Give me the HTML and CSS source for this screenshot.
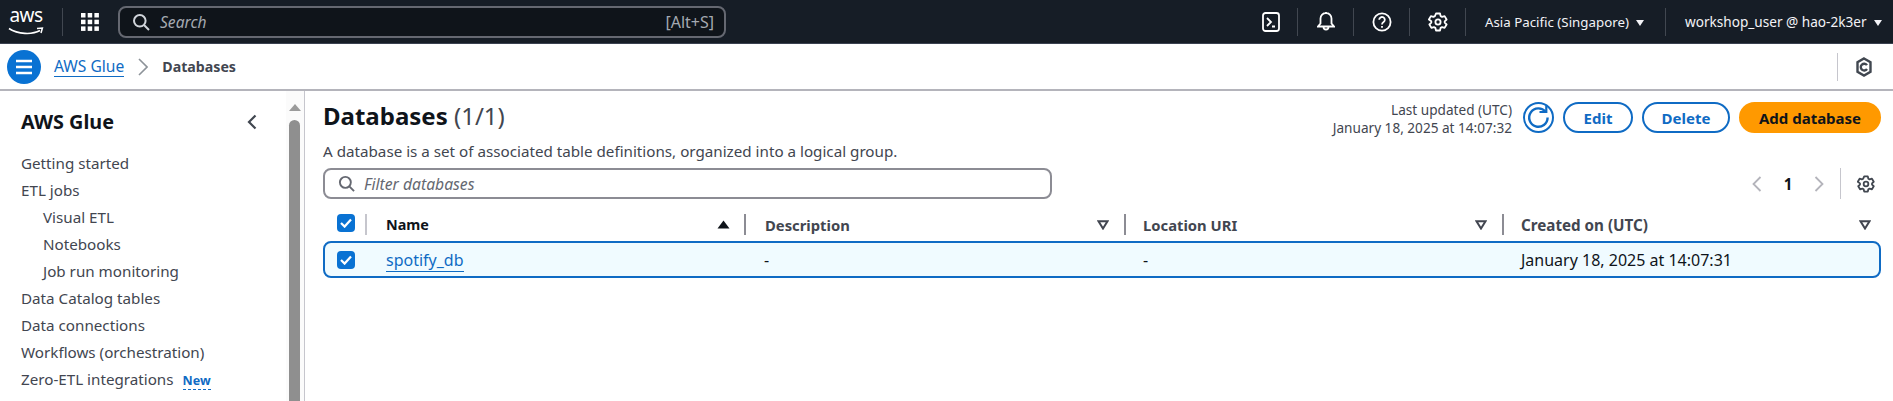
FILE: index.html
```html
<!DOCTYPE html>
<html lang="en">
<head>
<meta charset="utf-8">
<title>Databases | AWS Glue</title>
<link rel="stylesheet" href="styles.css">
</head>
<body>
<header class="topbar">
  <div class="logo"><span class="logo-text">aws</span>
    <svg class="logo-smile" width="36" height="9" viewBox="0 0 36 9"><path d="M1 1.5C10 7.5 24 8 32 3.6" fill="none" stroke="#fff" stroke-width="1.7"/><path d="M29 1.4L34.4 1 33 6" fill="none" stroke="#fff" stroke-width="1.5"/></svg>
  </div>
  <span class="tdiv tdiv-logo"></span>
  <svg class="grid-icon" width="20" height="20" viewBox="0 0 20 20" fill="#fff"><rect x="1" y="1" width="4.5" height="4.5"/><rect x="7.7" y="1" width="4.5" height="4.5"/><rect x="14.4" y="1" width="4.5" height="4.5"/><rect x="1" y="7.7" width="4.5" height="4.5"/><rect x="7.7" y="7.7" width="4.5" height="4.5"/><rect x="14.4" y="7.7" width="4.5" height="4.5"/><rect x="1" y="14.4" width="4.5" height="4.5"/><rect x="7.7" y="14.4" width="4.5" height="4.5"/><rect x="14.4" y="14.4" width="4.5" height="4.5"/></svg>
  <div class="search">
    <svg width="18" height="18" viewBox="0 0 18 18" fill="none" stroke="#d1d5db" stroke-width="2"><circle cx="7.8" cy="7.8" r="5.8"/><path d="M12 12l5 5"/></svg>
    <span class="search-text">Search</span>
    <span class="search-key">[Alt+S]</span>
  </div>
  <div class="top-right">
    <span class="top-icon top-icon-first"><svg width="18" height="20" viewBox="0 0 18 20" fill="none" stroke="#fff" stroke-width="1.8"><rect x="1" y="1" width="16" height="18" rx="2.5"/><path d="M5 6l4 4-4 4M10 14.5h3"/></svg></span>
    <span class="top-icon"><svg width="18" height="21" viewBox="0 0 18 21" fill="none" stroke="#fff" stroke-width="1.8"><path d="M1 15.5h16l-2.5-3V7.5a5.5 5.5 0 0 0-11 0v5zM6.5 16a2.5 2.5 0 0 0 5 0M9 2V1"/></svg></span>
    <span class="top-icon"><svg width="20" height="20" viewBox="0 0 20 20" fill="none" stroke="#fff" stroke-width="1.8"><circle cx="10" cy="10" r="8.6"/><path d="M7.2 7.8a2.8 2.8 0 1 1 4.4 2.3c-1 .7-1.6 1.2-1.6 2.4"/><path d="M10 14v1.8"/></svg></span>
    <span class="top-icon"><svg width="20" height="20" viewBox="0 0 20 20" fill="none" stroke="#fff" stroke-width="1.8"><path d="M8 1.5h4l.6 2.6 1.5.8 2.5-.8 2 3.4-1.9 1.8v1.4l1.9 1.8-2 3.4-2.5-.8-1.5.8-.6 2.6H8l-.6-2.6-1.5-.8-2.5.8-2-3.4 1.9-1.8V9.3L.9 7.5l2-3.4 2.5.8 1.5-.8z" stroke-linejoin="round"/><circle cx="10" cy="10" r="2.6"/></svg></span>
    <span class="top-menu top-region">Asia Pacific (Singapore)<i class="caret"></i></span>
    <span class="top-menu top-user">workshop_user @ hao-2k3er<i class="caret"></i></span>
  </div>
</header>

<nav class="crumbs">
  <span class="menu-btn"><svg width="18" height="16" viewBox="0 0 18 16" stroke="#fff" stroke-width="2.4"><path d="M1 2h16M1 8h16M1 14h16"/></svg></span>
  <a class="crumb-link">AWS Glue</a>
  <svg class="crumb-sep" width="10" height="18" viewBox="0 0 10 18" fill="none" stroke="#8d9399" stroke-width="1.6"><path d="M1 1l8 8-8 8"/></svg>
  <span class="crumb-cur">Databases</span>
  <span class="crumb-right"><svg width="16" height="20" viewBox="0 0 16 20" fill="none" stroke="#414750" stroke-width="2.4"><path d="M8 1.5l6.5 3.7v9.6L8 18.5l-6.5-3.7V5.2z"/><path d="M11 8.2A3.4 3.4 0 1 0 11 12" /></svg></span>
</nav>

<div class="layout">
  <aside class="side">
    <div class="side-nav">
      <div class="side-head"><h2 class="side-title">AWS Glue</h2>
        <svg width="10" height="16" viewBox="0 0 10 16" fill="none" stroke="#414750" stroke-width="2.2"><path d="M8.5 1.5L2 8l6.5 6.5"/></svg>
      </div>
      <ul class="side-list">
        <li>Getting started</li>
        <li>ETL jobs</li>
        <li class="sub">Visual ETL</li>
        <li class="sub">Notebooks</li>
        <li class="sub">Job run monitoring</li>
        <li>Data Catalog tables</li>
        <li>Data connections</li>
        <li>Workflows (orchestration)</li>
        <li>Zero-ETL integrations<span class="new">New</span></li>
      </ul>
    </div>
    <div class="scrollbar"><i class="scroll-up"></i><i class="scroll-thumb"></i></div>
  </aside>

  <main class="main">
    <div class="head">
      <div class="head-left">
        <h1 class="title">Databases <span class="count">(1/1)</span></h1>
        <p class="desc">A database is a set of associated table definitions, organized into a logical group.</p>
      </div>
      <div class="actions">
        <div class="updated">Last updated (UTC)<br>January 18, 2025 at 14:07:32</div>
        <span class="refresh"><svg width="25" height="25" viewBox="0 0 25 25" fill="none" stroke="#0f6bc4" stroke-width="2.4"><path d="M19.6 6.8A9.2 9.2 0 1 0 21.6 12.5"/><path d="M13.5 7h6.8V.8" stroke-width="2.2"/></svg></span>
        <button class="btn btn-edit">Edit</button>
        <button class="btn btn-delete">Delete</button>
        <button class="btn primary">Add database</button>
      </div>
    </div>
    <div class="tools">
      <div class="filter">
        <svg width="17" height="17" viewBox="0 0 18 18" fill="none" stroke="#656871" stroke-width="2"><circle cx="7.8" cy="7.8" r="5.8"/><path d="M12 12l5 5"/></svg>
        <span>Filter databases</span>
      </div>
      <div class="pager">
        <svg width="10" height="16" viewBox="0 0 10 16" fill="none" stroke="#b4b4bb" stroke-width="1.8"><path d="M8.5 1L1.5 8l7 7"/></svg>
        <b class="page-num">1</b>
        <svg width="10" height="16" viewBox="0 0 10 16" fill="none" stroke="#b4b4bb" stroke-width="1.8"><path d="M1.5 1l7 7-7 7"/></svg>
        <span class="pager-div"></span>
        <svg class="pager-gear" width="18" height="18" viewBox="0 0 20 20" fill="none" stroke="#414750" stroke-width="2"><path d="M8 1.5h4l.6 2.6 1.5.8 2.5-.8 2 3.4-1.9 1.8v1.4l1.9 1.8-2 3.4-2.5-.8-1.5.8-.6 2.6H8l-.6-2.6-1.5-.8-2.5.8-2-3.4 1.9-1.8V9.3L.9 7.5l2-3.4 2.5.8 1.5-.8z" stroke-linejoin="round"/><circle cx="10" cy="10" r="2.6"/></svg>
      </div>
    </div>
    <div class="thead tgrid">
      <div class="cell-check check-rule"><span class="check"><svg width="12" height="10" viewBox="0 0 12 10" fill="none" stroke="#fff" stroke-width="2.2"><path d="M1 5l3.6 3.6L11 1.5"/></svg></span></div>
      <div class="th th-sorted"><span>Name</span><svg width="13" height="9" viewBox="0 0 13 9"><path d="M6.5 .5L12.5 8.5H.5z" fill="#0f141a"/></svg></div>
      <div class="th th-desc"><span>Description</span><svg width="12" height="10" viewBox="0 0 12 10" fill="none" stroke="#424650" stroke-width="2"><path d="M1.5 1.2h9L6 8.5z"/></svg></div>
      <div class="th"><span>Location URI</span><svg width="12" height="10" viewBox="0 0 12 10" fill="none" stroke="#424650" stroke-width="2"><path d="M1.5 1.2h9L6 8.5z"/></svg></div>
      <div class="th th-last"><span>Created on (UTC)</span><svg width="12" height="10" viewBox="0 0 12 10" fill="none" stroke="#424650" stroke-width="2"><path d="M1.5 1.2h9L6 8.5z"/></svg></div>
    </div>
    <div class="trow tgrid">
      <div class="cell-check"><span class="check"><svg width="12" height="10" viewBox="0 0 12 10" fill="none" stroke="#fff" stroke-width="2.2"><path d="M1 5l3.6 3.6L11 1.5"/></svg></span></div>
      <div class="td"><a class="row-link">spotify_db</a></div>
      <div class="td td-dash">-</div>
      <div class="td">-</div>
      <div class="td">January 18, 2025 at 14:07:31</div>
    </div>
  </main>
</div>
</body>
</html>
```

FILE: styles.css
```css
* { box-sizing: border-box; }
html, body { margin: 0; height: 401px; overflow: hidden; }
body { font-family: "Noto Sans", "Open Sans", sans-serif; font-size: 15.2px; color: #0f141a; background: #fff; }

.topbar { height: 44px; background: #161d26; border-bottom: 1px solid #3a4150; display: flex; align-items: center; color: #fff; padding-left: 8px; }
.logo { width: 36px; height: 34px; position: relative; flex: none; }
.logo-text { display: block; font-size: 19px; line-height: 22px; text-align: center; color: #fff; letter-spacing: -.5px; margin-top: -1px; }
.logo-smile { position: absolute; left: 0; top: 22px; }
.tdiv { width: 1px; background: #414750; flex: none; }
.tdiv-logo { height: 28px; margin: 0 17px 0 18px; }
.grid-icon { flex: none; }
.search { width: 608px; height: 32px; margin-left: 18px; background: #0f141a; border: 2px solid #656871; border-radius: 8px; display: flex; align-items: center; padding: 0 10px 0 12px; flex: none; }
.search-text { font-style: italic; font-size: 15.6px; color: #a4a9b1; margin-left: 10px; }
.search-key { margin-left: auto; font-size: 16px; color: #a4a9b1; }
.top-right { margin-left: auto; display: flex; align-items: center; height: 100%; }
.top-icon { width: 56px; height: 28px; display: flex; align-items: center; justify-content: center; border-right: 1px solid #414750; }
.top-icon-first { padding-left: 3px; }
.top-menu { height: 28px; display: flex; align-items: center; color: #f3f3f7; white-space: nowrap; }
.top-region { font-size: 13.3px; padding-left: 19px; width: 200px; border-right: 1px solid #414750; }
.top-user { font-size: 13.6px; width: 227px; padding-left: 19px; }
.caret { width: 0; height: 0; border-left: 4px solid transparent; border-right: 4px solid transparent; border-top: 6px solid #f3f3f7; margin-left: 7px; margin-top: 2px; }

.crumbs { height: 47px; border-bottom: 2px solid #b4b4bb; display: flex; align-items: center; padding-left: 7px; }
.menu-btn { width: 34px; height: 34px; border-radius: 50%; background: #0972d3; display: flex; align-items: center; justify-content: center; }
.crumb-link { color: #0f6bc4; font-size: 15.6px; margin-left: 13px; border-bottom: 1px solid #0f6bc4; line-height: 20px; }
.crumb-sep { margin: 0 14px; }
.crumb-cur { font-size: 14.2px; font-weight: 700; color: #424650; }
.crumb-right { margin-left: auto; margin-right: 9px; width: 47px; height: 28px; border-left: 1px solid #c6c6cd; display: flex; align-items: center; justify-content: flex-end; padding-right: 12px; }

.layout { display: flex; height: 310px; }
.side { width: 305px; flex: none; border-right: 1px solid #c6c6cd; display: flex; }
.side-nav { width: 286px; padding-left: 21px; flex: none; }
.side-head { height: 56px; display: flex; align-items: center; justify-content: space-between; padding: 6px 29px 0 0; }
.side-title { margin: 0; font-size: 19.8px; font-weight: 700; line-height: 24px; }
.side-list { list-style: none; margin: 3px 0 0; padding: 0; color: #424650; }
.side-list li { height: 27px; line-height: 27px; white-space: nowrap; }
.side-list .sub { padding-left: 22px; }
.new { color: #0f6bc4; font-size: 12.5px; font-weight: 700; margin-left: 9px; border-bottom: 1px dashed #0f6bc4; line-height: 16px; display: inline-block; }
.scrollbar { flex: 1; background: #fbfbfb; display: flex; flex-direction: column; align-items: center; padding: 13px 1px 0 0; }
.scroll-up { width: 0; height: 0; border-left: 6.5px solid transparent; border-right: 6.5px solid transparent; border-bottom: 7px solid #9b9b9b; }
.scroll-thumb { width: 11px; flex: 1; margin-top: 9px; background: #8f8f8f; border-radius: 6px 6px 0 0; }

.main { flex: 1; padding: 0 12px 0 18px; min-width: 0; }
.head { display: flex; justify-content: space-between; height: 77px; }
.title { margin: 7px 0 0; font-size: 24px; font-weight: 700; line-height: 36px; }
.count { font-weight: 400; color: #424650; }
.desc { margin: 7px 0 0; color: #424650; line-height: 20px; }
.actions { display: flex; align-items: flex-start; padding-top: 11px; gap: 9px; }
.updated { text-align: right; color: #424650; font-size: 13.6px; line-height: 18px; margin-top: -1px; }
.refresh { width: 31px; height: 31px; border: 2px solid #0f6bc4; border-radius: 50%; display: flex; align-items: center; justify-content: center; margin-left: 2px; }
.btn { height: 31px; padding: 0; border: 2px solid #0f6bc4; border-radius: 16px; background: #fff; color: #0f6bc4; font: 700 15px "Noto Sans", sans-serif; }
.btn-edit { width: 70px; }
.btn-delete { width: 88px; }
.btn.primary { background: #ff9900; border-color: #ff9900; color: #0f141a; width: 142px; }

.tools { display: flex; justify-content: space-between; align-items: center; height: 31px; }
.filter { width: 729px; height: 31px; border: 2px solid #8c8c94; border-radius: 8px; display: flex; align-items: center; padding-left: 13px; font-style: italic; color: #656871; }
.filter span { margin: 1px 0 0 9px; font-size: 15.7px; }
.pager { display: flex; align-items: center; height: 31px; }
.page-num { width: 52px; text-align: center; color: #0f141a; }
.pager-div { width: 1px; height: 31px; background: #c6c6cd; margin: 0 16px; }
.pager-gear { margin-right: 6px; }

.tgrid { display: grid; grid-template-columns: 44px 377px 380px 378px 379px; }
.thead { height: 24px; margin-top: 15px; font-size: 14.8px; font-weight: 700; color: #424650; }
.cell-check { display: flex; align-items: center; padding-left: 14px; height: 100%; }
.check-rule { align-items: flex-start; }
.th { display: flex; align-items: center; justify-content: space-between; border-left: 2px solid #8c8c94; height: 21px; padding: 0 15px 0 17px; }
.th-desc { padding-left: 19px; }
.th-last { padding-right: 10px; font-size: 15.2px; }
.th-sorted { color: #0f141a; font-size: 14.4px; }
.thead .cell-check { height: 21px; border-right: 2px solid #c6c6cd; }
.thead .th-sorted { border-left: 0; padding: 0 14px 0 19px; }
.check { width: 18px; height: 18px; background: #0972d3; border-radius: 4px; display: flex; align-items: center; justify-content: center; }
.trow { height: 37px; margin-top: 3px; background: #f0fbff; border: 2px solid #0f6bc4; border-radius: 8px; align-items: center; font-size: 16px; }
.trow .cell-check { padding-left: 12px; }
.td { padding-left: 17px; }
.td-dash { padding-left: 18px; }
.row-link { color: #0f6bc4; border-bottom: 1px solid #0f6bc4; }
```
